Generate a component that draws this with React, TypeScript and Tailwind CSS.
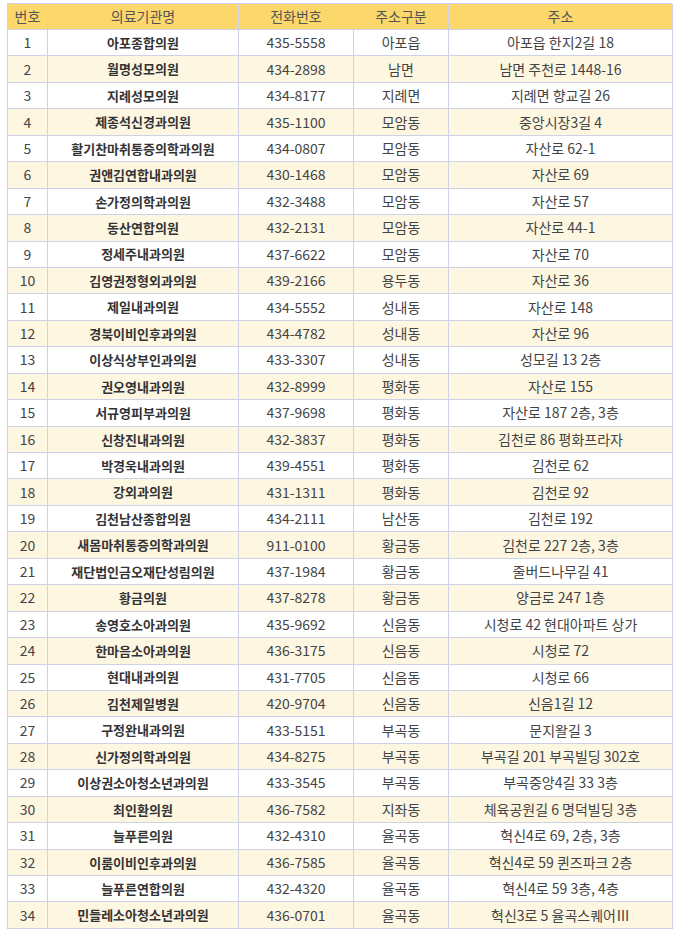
import React from 'react'

const rows: [string, string, string, string][] = [
    ['아포종합의원', '435-5558', '아포읍', '아포읍 한지2길 18'],
    ['월명성모의원', '434-2898', '남면', '남면 주천로 1448-16'],
    ['지례성모의원', '434-8177', '지례면', '지례면 향교길 26'],
    ['제종석신경과의원', '435-1100', '모암동', '중앙시장3길 4'],
    ['활기찬마취통증의학과의원', '434-0807', '모암동', '자산로 62-1'],
    ['권앤김연합내과의원', '430-1468', '모암동', '자산로 69'],
    ['손가정의학과의원', '432-3488', '모암동', '자산로 57'],
    ['동산연합의원', '432-2131', '모암동', '자산로 44-1'],
    ['정세주내과의원', '437-6622', '모암동', '자산로 70'],
    ['김영권정형외과의원', '439-2166', '용두동', '자산로 36'],
    ['제일내과의원', '434-5552', '성내동', '자산로 148'],
    ['경북이비인후과의원', '434-4782', '성내동', '자산로 96'],
    ['이상식상부인과의원', '433-3307', '성내동', '성모길 13 2층'],
    ['권오영내과의원', '432-8999', '평화동', '자산로 155'],
    ['서규영피부과의원', '437-9698', '평화동', '자산로 187 2층, 3층'],
    ['신창진내과의원', '432-3837', '평화동', '김천로 86 평화프라자'],
    ['박경욱내과의원', '439-4551', '평화동', '김천로 62'],
    ['강외과의원', '431-1311', '평화동', '김천로 92'],
    ['김천남산종합의원', '434-2111', '남산동', '김천로 192'],
    ['새몸마취통증의학과의원', '911-0100', '황금동', '김천로 227 2층, 3층'],
    ['재단법인금오재단성림의원', '437-1984', '황금동', '줄버드나무길 41'],
    ['황금의원', '437-8278', '황금동', '양금로 247 1층'],
    ['송영호소아과의원', '435-9692', '신음동', '시청로 42 현대아파트 상가'],
    ['한마음소아과의원', '436-3175', '신음동', '시청로 72'],
    ['현대내과의원', '431-7705', '신음동', '시청로 66'],
    ['김천제일병원', '420-9704', '신음동', '신음1길 12'],
    ['구정완내과의원', '433-5151', '부곡동', '문지왈길 3'],
    ['신가정의학과의원', '434-8275', '부곡동', '부곡길 201 부곡빌딩 302호'],
    ['이상권소아청소년과의원', '433-3545', '부곡동', '부곡중앙4길 33 3층'],
    ['최인환의원', '436-7582', '지좌동', '체육공원길 6 명덕빌딩 3층'],
    ['늘푸른의원', '432-4310', '율곡동', '혁신4로 69, 2층, 3층'],
    ['이룸이비인후과의원', '436-7585', '율곡동', '혁신4로 59 퀸즈파크 2층'],
    ['늘푸른연합의원', '432-4320', '율곡동', '혁신4로 59 3층, 4층'],
    ['민들레소아청소년과의원', '436-0701', '율곡동', '혁신3로 5 율곡스퀘어Ⅲ'],
]

const cols = 'grid grid-cols-[40px_191px_115px_95px_224px]'
const cell = 'flex items-center justify-center border-r border-b border-[#cfd2e4] whitespace-nowrap'

export default function App() {
    return (
        <div className="bg-white w-[683px] h-[937px] pt-[3px] pl-[7px]" style={{ fontFamily: '"Noto Sans CJK KR", "Noto Sans", sans-serif' }}>
            <div className="w-[665px] border-l border-t border-[#cfd2e4] text-[14px] text-[#444]">
                <div className={`${cols} h-[26px] bg-[#fcd86c] text-[#555]`}>
                    <div className={cell}>번호</div>
                    <div className={cell}>의료기관명</div>
                    <div className={cell}>전화번호</div>
                    <div className={cell}>주소구분</div>
                    <div className={cell}>주소</div>
                </div>
                {rows.map((r, i) => (
                    <div key={i} className={`${cols} h-[26.45px] ${i % 2 === 1 ? 'bg-[#fdf6e1]' : 'bg-white'}`}>
                        <div className={cell}>{i + 1}</div>
                        <div className={`${cell} font-bold text-[13px] text-[#333]`}>{r[0]}</div>
                        <div className={cell}>{r[1]}</div>
                        <div className={cell}>{r[2]}</div>
                        <div className={cell}>{r[3]}</div>
                    </div>
                ))}
            </div>
        </div>
    )
}
